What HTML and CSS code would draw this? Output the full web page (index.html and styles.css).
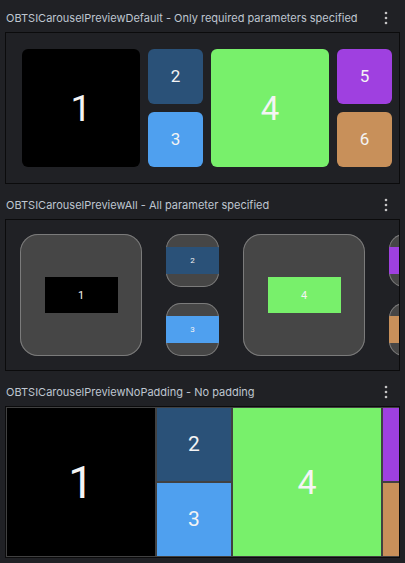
FILE: index.html
```html
<!DOCTYPE html>
<html>
<head>
<meta charset="utf-8">
<link rel="stylesheet" href="styles.css">
</head>
<body>
<div class="page">
  <section class="preview">
    <div class="head">
      <span class="title">OBTSICarouselPreviewDefault - Only required parameters specified</span>
      <svg class="dots" width="4" height="14" viewBox="0 0 4 14"><circle cx="2" cy="2" r="1.3"/><circle cx="2" cy="7" r="1.3"/><circle cx="2" cy="12" r="1.3"/></svg>
    </div>
    <div class="frame f1">
      <div class="item big c1"><span class="n n1">1</span></div>
      <div class="col">
        <div class="item small c2"><span class="n">2</span></div>
        <div class="item small c3"><span class="n">3</span></div>
      </div>
      <div class="item big c4"><span class="n n4">4</span></div>
      <div class="col">
        <div class="item small c5"><span class="n">5</span></div>
        <div class="item small c6"><span class="n">6</span></div>
      </div>
    </div>
  </section>

  <section class="preview">
    <div class="head">
      <span class="title">OBTSICarouselPreviewAll - All parameter specified</span>
      <svg class="dots" width="4" height="14" viewBox="0 0 4 14"><circle cx="2" cy="2" r="1.3"/><circle cx="2" cy="7" r="1.3"/><circle cx="2" cy="12" r="1.3"/></svg>
    </div>
    <div class="frame f2">
      <div class="item big"><div class="inner c1"><span class="n">1</span></div></div>
      <div class="col">
        <div class="item small"><div class="inner c2"><span class="n">2</span></div></div>
        <div class="item small"><div class="inner c3"><span class="n">3</span></div></div>
      </div>
      <div class="item big"><div class="inner c4"><span class="n">4</span></div></div>
      <div class="col">
        <div class="item small"><div class="inner c5"></div></div>
        <div class="item small"><div class="inner c6"></div></div>
      </div>
    </div>
  </section>

  <section class="preview">
    <div class="head">
      <span class="title">OBTSICarouselPreviewNoPadding - No padding</span>
      <svg class="dots" width="4" height="14" viewBox="0 0 4 14"><circle cx="2" cy="2" r="1.3"/><circle cx="2" cy="7" r="1.3"/><circle cx="2" cy="12" r="1.3"/></svg>
    </div>
    <div class="frame f3">
      <div class="item big c1"><span class="n n1">1</span></div>
      <div class="col">
        <div class="item small c2"><span class="n">2</span></div>
        <div class="item small c3"><span class="n">3</span></div>
      </div>
      <div class="item big c4"><span class="n n4">4</span></div>
      <div class="col">
        <div class="item small c5"></div>
        <div class="item small c6"></div>
      </div>
    </div>
  </section>
</div>
</body>
</html>
```

FILE: styles.css
```css
* { box-sizing: border-box; }
html, body {
  margin: 0;
  padding: 0;
  background: #202125;
  width: 405px;
  height: 563px;
  overflow: hidden;
}
.page {
  padding-top: 4px;
  display: flex;
  flex-direction: column;
  gap: 7px;
}
.preview {
  display: flex;
  flex-direction: column;
}
.head {
  height: 28px;
  display: flex;
  align-items: center;
  justify-content: space-between;
  padding-left: 6px;
  padding-right: 17px;
}
.title {
  font-family: Inter, "Noto Sans", sans-serif;
  font-size: 11px;
  color: #bfc6d0;
  white-space: nowrap;
}
.dots { fill: #c4c4c4; display: block; flex-shrink: 0; }

.frame {
  margin-left: 5px;
  width: 395px;
  height: 152px;
  border: 1px solid #0b0b0c;
  display: flex;
  overflow: hidden;
}
.col {
  display: flex;
  flex-direction: column;
  flex-shrink: 0;
}
.item {
  flex-shrink: 0;
  display: flex;
  align-items: center;
  justify-content: center;
  overflow: hidden;
}
.n {
  font-family: Roboto, "Noto Sans", sans-serif;
  color: #f4f4f4;
  line-height: 1;
}
.c1 { background: #000000; }
.c2 { background: #2a5178; }
.c3 { background: #4fa0ef; }
.c4 { background: #78f06b; }
.c5 { background: #9f40e0; }
.c6 { background: #c8905a; }

/* Frame 1 */
.f1 { padding: 16px; gap: 8px; }
.f1 .col { gap: 8px; }
.f1 .big { width: 118px; height: 118px; border-radius: 6px; }
.f1 .small { width: 55px; height: 55px; border-radius: 6px; }
.f1 .n { font-size: 17px; }
.f1 .n1 { font-size: 37px; }
.f1 .n4 { font-size: 33px; }

/* Frame 2 */
.f2 { padding: 14px; gap: 24px; }
.f2 .col { gap: 16px; }
.f2 .item {
  background: #464646;
  box-shadow: inset 0 0 0 1px #7b7b7b;
}
.f2 .big { width: 122px; height: 122px; border-radius: 18px; }
.f2 .small { width: 53px; height: 53px; border-radius: 15px; }
.inner {
  display: flex;
  align-items: center;
  justify-content: center;
}
.f2 .big .inner { width: 73px; height: 36px; }
.f2 .big .n { font-size: 11px; }
.f2 .small .inner { width: 100%; height: 27px; }
.f2 .small .n { font-size: 8px; }

/* Frame 3 */
.f3 { padding: 1px; gap: 2px; background: #414141; }
.f3 .col { gap: 2px; }
.f3 .big { width: 148px; height: 148px; }
.f3 .small { width: 74px; height: 73px; }
.f3 .n { font-size: 21px; }
.f3 .n1 { font-size: 45px; }
.f3 .n4 { font-size: 34px; }
```
